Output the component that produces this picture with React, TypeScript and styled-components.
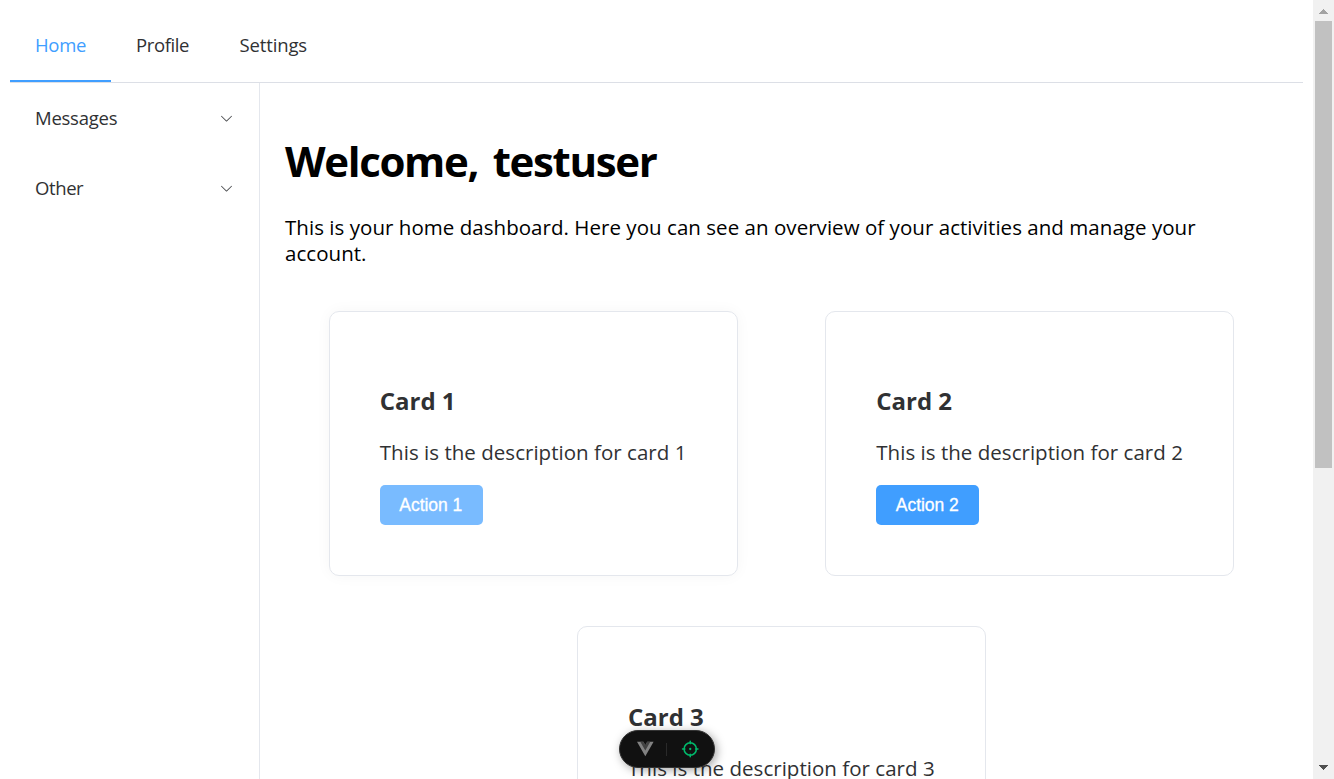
import React from 'react';
import styled, { createGlobalStyle } from 'styled-components';

const GlobalStyle = createGlobalStyle`
  * { box-sizing: border-box; }
  html, body { margin: 0; padding: 0; overflow: hidden; background: #fff; }
  body { font-family: 'Open Sans', 'Noto Sans', sans-serif; color: #000; }
  h1, h3, p { margin: 0; }
`;

const Viewport = styled.div`
  position: relative;
  display: grid;
  grid-template-columns: 1fr 21px;
  height: 779px;
  overflow: hidden;
`;

const Page = styled.div`
  display: flex;
  flex-direction: column;
  padding: 10px 10px 0;
  height: 779px;
  overflow: hidden;
`;

const TopMenu = styled.nav`
  display: flex;
  flex: none;
  height: 73px;
  border-bottom: 1px solid #dcdfe6;
`;

const TopItem = styled.a<{ $active?: boolean; $width: number; $spacing: number }>`
  width: ${(p) => p.$width}px;
  height: 72px;
  padding: 0 0 0 25px;
  border-bottom: 2px solid ${(p) => (p.$active ? '#409eff' : 'transparent')};
  color: ${(p) => (p.$active ? '#409eff' : '#303133')};
  font-size: 18.5px;
  line-height: 69px;
  letter-spacing: ${(p) => p.$spacing}px;
  white-space: nowrap;
`;

const Body = styled.div`
  display: flex;
  flex: 1;
  min-height: 0;
`;

const SideMenu = styled.aside`
  flex: none;
  width: 250px;
  border-right: 1px solid #e4e7ed;
`;

const SideItem = styled.div<{ $spacing: number }>`
  display: flex;
  align-items: center;
  justify-content: space-between;
  height: 70px;
  padding: 0 25px 1px;
  color: #303133;
  font-size: 18.5px;
  line-height: 70px;
  letter-spacing: ${(p) => p.$spacing}px;
`;

const Main = styled.main`
  flex: 1;
  min-width: 0;
  padding: 48px 25px 0;
`;

const Title = styled.h1`
  font-size: 42px;
  font-weight: 700;
  line-height: 60px;
  letter-spacing: -1.35px;
  word-spacing: 5px;
  white-space: nowrap;
`;

const Intro = styled.p`
  margin-top: 23px;
  font-size: 20.5px;
  line-height: 26px;
  letter-spacing: 0.04px;
`;

const Cards = styled.div`
  display: flex;
  flex-wrap: wrap;
  justify-content: space-around;
  row-gap: 50.3px;
  margin-top: 45.1px;
`;

const CardBox = styled.section<{ $raised?: boolean }>`
  display: flex;
  flex-direction: column;
  align-items: flex-start;
  width: 409px;
  height: 265px;
  padding: 72.2px 50px 0;
  border: 1px solid #e4e7ed;
  border-radius: 10px;
  color: #303133;
  box-shadow: ${(p) => (p.$raised ? '0 0 15px rgba(0, 0, 0, 0.04)' : 'none')};
`;

const CardTitle = styled.h3`
  font-size: 24px;
  font-weight: 700;
  line-height: 33px;
`;

const CardText = styled.p`
  margin-top: 21px;
  font-size: 20.5px;
  line-height: 28px;
  letter-spacing: 0.03px;
  white-space: nowrap;
`;

const Action = styled.button<{ $faded?: boolean }>`
  width: 103px;
  height: 40px;
  margin-top: 18.4px;
  padding: 2px 1px 0 0;
  border: 0;
  border-radius: 5px;
  background: ${(p) => (p.$faded ? '#79bbff' : '#409eff')};
  color: #fff;
  font: 500 17.5px 'Liberation Sans', Arial, sans-serif;
  letter-spacing: -0.05px;
  -webkit-text-stroke: 0.3px #fff;
`;

const ScrollTrack = styled.div`
  display: flex;
  flex-direction: column;
  align-items: center;
  background: #f1f1f1;
`;

const ScrollButton = styled.div<{ $end?: boolean }>`
  display: flex;
  flex: none;
  justify-content: center;
  height: 21px;
  margin-top: ${(p) => (p.$end ? 'auto' : '0')};
  padding-top: ${(p) => (p.$end ? '7px' : '9px')};
`;

const ScrollThumb = styled.div`
  width: 17px;
  height: 447px;
  background: #c1c1c1;
`;

const DevTools = styled.div`
  position: absolute;
  left: 619px;
  top: 730px;
  display: flex;
  align-items: center;
  width: 96px;
  height: 38px;
  padding: 0 15px 0 17px;
  border: 1px solid #333;
  border-radius: 19px;
  background: #111;
  box-shadow: 2px 2px 10px rgba(0, 0, 0, 0.35);
`;

const Divider = styled.span`
  width: 1px;
  height: 13px;
  margin: 0 14px 0 12px;
  background: #2a2a2a;
`;

const ChevronIcon = styled.svg`
  flex: none;
  width: 15px;
  height: 15px;
  margin-top: 1px;
  fill: #484a4d;
`;

const Chevron = () => (
  <ChevronIcon viewBox="0 0 1024 1024">
    <path d="M831.872 340.864 512 652.672 192.128 340.864a30.592 30.592 0 0 0-42.752 0 29.12 29.12 0 0 0 0 41.6L489.664 714.24a32 32 0 0 0 44.672 0l340.288-331.712a29.12 29.12 0 0 0 0-41.728 30.592 30.592 0 0 0-42.752 0z" />
  </ChevronIcon>
);

const VueLogo = () => (
  <svg width="18" height="16" viewBox="0 0 256 221">
    <path fill="#828282" d="M204.8 0H256L128 220.8 0 0h97.92L128 51.2 157.44 0z" />
    <path fill="#424242" d="M50.56 0 128 133.12 204.8 0h-47.36L128 51.2 97.92 0z" />
  </svg>
);

const Crosshair = () => (
  <svg width="20" height="20" viewBox="0 0 24 24" fill="none" stroke="#00b86b" strokeWidth="2">
    <circle cx="12" cy="12" r="8" />
    <circle cx="12" cy="12" r="1.5" fill="#00b86b" stroke="none" />
    <path strokeLinecap="round" d="M12 2v3M12 19v3M2 12h3M19 12h3" />
  </svg>
);

const cards = [1, 2, 3];

export default function App() {
  return (
    <>
      <GlobalStyle />
      <Viewport>
        <Page>
          <TopMenu>
            <TopItem $active $width={101} $spacing={-0.3}>Home</TopItem>
            <TopItem $width={103.4} $spacing={-0.38}>Profile</TopItem>
            <TopItem $width={118} $spacing={-0.12}>Settings</TopItem>
          </TopMenu>
          <Body>
            <SideMenu>
              <SideItem $spacing={-0.24}>Messages<Chevron /></SideItem>
              <SideItem $spacing={-0.4}>Other<Chevron /></SideItem>
            </SideMenu>
            <Main>
              <Title>Welcome, testuser</Title>
              <Intro>
                This is your home dashboard. Here you can see an overview of your activities and manage your account.
              </Intro>
              <Cards>
                {cards.map((n) => (
                  <CardBox key={n} $raised={n === 1}>
                    <CardTitle>Card {n}</CardTitle>
                    <CardText>This is the description for card {n}</CardText>
                    <Action $faded={n === 1}>Action {n}</Action>
                  </CardBox>
                ))}
              </Cards>
            </Main>
          </Body>
        </Page>
        <ScrollTrack>
          <ScrollButton>
            <svg width="9" height="5" viewBox="0 0 9 5" shapeRendering="crispEdges"><path fill="#a3a3a3" d="M4.5 0 9 4.5V5H0v-.5z" /></svg>
          </ScrollButton>
          <ScrollThumb />
          <ScrollButton $end>
            <svg width="9" height="5" viewBox="0 0 9 5" shapeRendering="crispEdges"><path fill="#505050" d="M4.5 5 9 .5V0H0v.5z" /></svg>
          </ScrollButton>
        </ScrollTrack>
        <DevTools>
          <VueLogo />
          <Divider />
          <Crosshair />
        </DevTools>
      </Viewport>
    </>
  );
}
